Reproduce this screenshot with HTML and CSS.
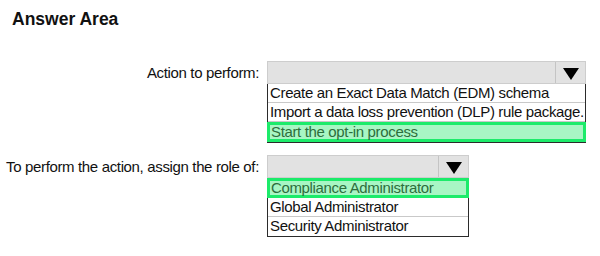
FILE: index.html
```html
<!DOCTYPE html>
<html lang="en">

<head>
    <meta charset="UTF-8">
    <meta name="viewport" content="width=device-width, initial-scale=1.0">
    <title>Answer Area</title>
    <link rel="stylesheet" href="styles.css">
</head>

<body>
    <h1 class="title">Answer Area</h1>

    <section class="question q-action">
        <div class="label">Action to perform:</div>
        <div class="dropdown dropdown-wide">
            <div class="select"><span class="arrow"></span></div>
            <ul class="options">
                <li>Create an Exact Data Match (EDM) schema</li>
                <li>Import a data loss prevention (DLP) rule package.</li>
                <li class="selected">Start the opt-in process</li>
            </ul>
        </div>
    </section>

    <section class="question q-role">
        <div class="label">To perform the action, assign the role of:</div>
        <div class="dropdown dropdown-narrow">
            <div class="select"><span class="arrow"></span></div>
            <ul class="options">
                <li class="selected">Compliance Administrator</li>
                <li>Global Administrator</li>
                <li>Security Administrator</li>
            </ul>
        </div>
    </section>
</body>

</html>
```

FILE: styles.css
```css
html {
    box-sizing: border-box;
    font-family: "Liberation Sans", Arial, sans-serif;
    font-size: 15px;
    letter-spacing: -0.35px;
    color: #111;
}

*,
*:before,
*:after {
    box-sizing: inherit;
}

body {
    margin: 0;
    width: 600px;
    height: 256px;
    background-color: #fff;
}

.title {
    margin: 0;
    padding: 9px 0 0 12px;
    font-size: 17.5px;
    font-weight: bold;
    letter-spacing: 0;
    line-height: 20px;
}

.question {
    display: flex;
    align-items: flex-start;
}

.q-action {
    margin-top: 32px;
}

.q-role {
    margin-top: 12px;
}

.label {
    width: 260px;
    padding-right: 1px;
    text-align: right;
    white-space: nowrap;
    line-height: 23px;
}

.dropdown {
    margin-left: 7px;
}

.dropdown-wide {
    width: 319px;
}

.dropdown-narrow {
    width: 202px;
}

.select {
    height: 23px;
    display: flex;
    justify-content: flex-end;
    background-color: #e2e2e2;
    border: 1px solid #cdcdcd;
}

.arrow {
    width: 30px;
    border-left: 1px solid #c4c4c4;
    display: flex;
    justify-content: center;
    align-items: center;
}

.arrow:after {
    content: "";
    border-left: 8px solid transparent;
    border-right: 8px solid transparent;
    border-top: 12px solid #000;
    margin-top: 2px;
}

.options {
    list-style: none;
    margin: 0;
    padding: 0;
    border: 1px solid #2b2b2b;
    border-top: none;
}

.options li {
    height: 19px;
    line-height: 18px;
    padding-left: 2px;
    border-bottom: 1px solid #c9c9c9;
    white-space: nowrap;
}

.options li:last-child {
    border-bottom: none;
}

.options li.selected {
    margin: 0 -1px;
    padding-left: 1px;
    line-height: 14px;
    height: 20px;
    background-color: #a8f6c4;
    border: 3px solid #1ceb6a;
    color: #2c6e3c;
}
```
